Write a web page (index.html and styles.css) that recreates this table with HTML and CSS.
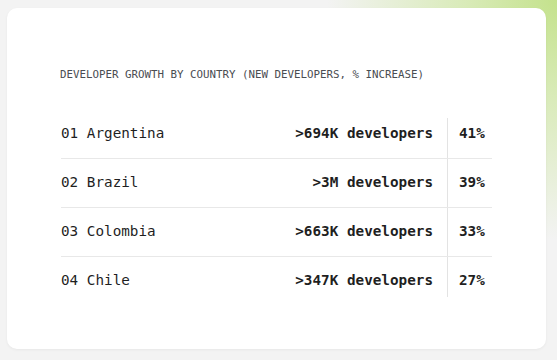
FILE: index.html
```html
<!DOCTYPE html>
<html>
<head>
<meta charset="utf-8">
<link rel="stylesheet" href="styles.css">
</head>
<body>
<div class="card">
  <div class="title">DEVELOPER GROWTH BY COUNTRY (NEW DEVELOPERS, % INCREASE)</div>
  <table class="stats">
    <tr><td class="name">01 Argentina</td><td class="dev">&gt;694K developers</td><td class="pct">41%</td></tr>
    <tr><td class="name">02 Brazil</td><td class="dev">&gt;3M developers</td><td class="pct">39%</td></tr>
    <tr><td class="name">03 Colombia</td><td class="dev">&gt;663K developers</td><td class="pct">33%</td></tr>
    <tr><td class="name">04 Chile</td><td class="dev">&gt;347K developers</td><td class="pct">27%</td></tr>
  </table>
</div>
</body>
</html>
```
FILE: styles.css
```css
html, body {
  margin: 0;
  padding: 0;
}
body {
  width: 557px;
  height: 360px;
  overflow: hidden;
  background:
    radial-gradient(ellipse 230px 240px at 100% 0%, rgba(196, 226, 140, 1) 0%, rgba(208, 232, 165, 0.75) 40%, rgba(243, 243, 243, 0) 100%),
    #f3f3f3;
  font-family: "DejaVu Sans Mono", monospace;
  color: #1f1f1f;
  padding: 8px 0 0 7px;
  box-sizing: border-box;
}
.card {
  width: 539px;
  height: 341px;
  box-sizing: border-box;
  background: #fff;
  border-radius: 10px;
  box-shadow: 0 1px 3px rgba(0, 0, 0, 0.05);
  padding: 60px 0 0 53px;
}
.title {
  font-size: 10.8px;
  line-height: 13px;
  color: #4a4d52;
}
.stats {
  margin-top: 37px;
  margin-left: 1px;
  width: 431px;
  border-collapse: collapse;
  font-size: 14.3px;
  line-height: 17px;
}
.stats td {
  padding: 15px 0 16px 0;
  border-bottom: 1px solid #e8e8e8;
  vertical-align: middle;
}
.stats tr:first-child td {
  padding-top: 7px;
}
.stats tr:last-child td {
  border-bottom: none;
  padding-bottom: 8px;
}
.stats td.name {
  text-align: left;
}
.stats td.dev {
  text-align: right;
  font-weight: bold;
  padding-right: 14px;
}
.stats td.pct {
  width: 26px;
  font-weight: bold;
  border-left: 1px solid #e3e3e3;
  padding-left: 11px;
  padding-right: 7px;
}
```
